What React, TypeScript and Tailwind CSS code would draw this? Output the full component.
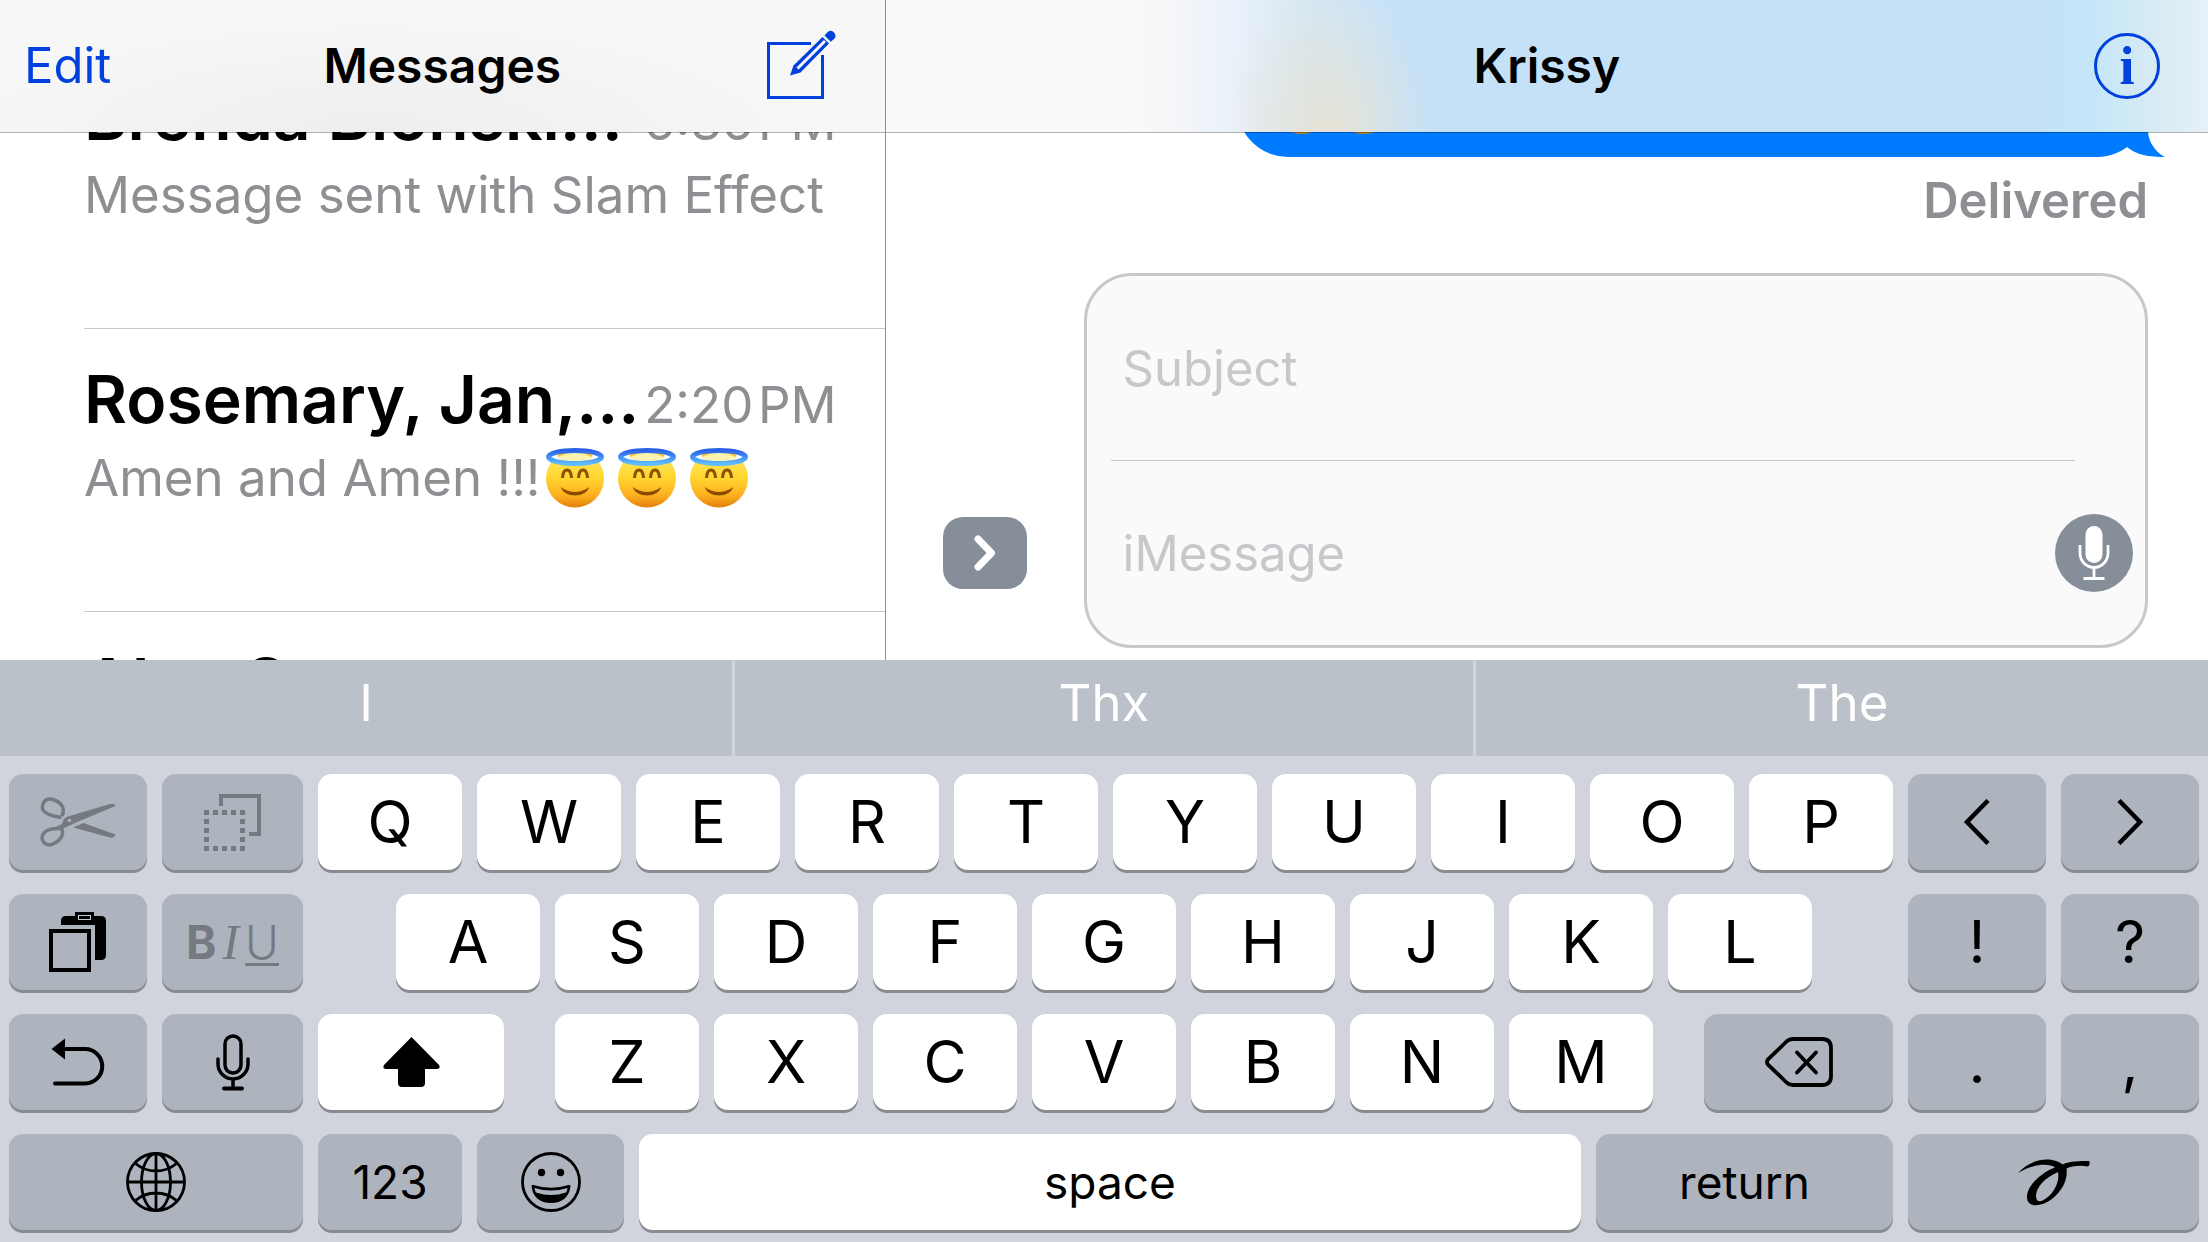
import type { ReactNode } from 'react'
import clsx from 'clsx'

interface Conversation {
  name: string
  time: string
  preview: string
  angels?: number
}

interface KeyDef {
  label: string
  // flex weight of the key inside its row
  size: string
  content?: ReactNode
  dark?: boolean
  small?: boolean
  spacer?: boolean
}

const conversations: Conversation[] = [
  { name: 'Brenda Blonski…', time: '6:36\u200aPM', preview: 'Message sent with Slam Effect' },
  { name: 'Rosemary, Jan,…', time: '2:20\u200aPM', preview: 'Amen and Amen !!!', angels: 3 },
  { name: 'Alan S', time: '', preview: '' }
]

const predictions = [
  { word: 'I', size: 'flex-[732]' },
  { word: 'Thx', size: 'flex-[738]' },
  { word: 'The', size: 'flex-[732]' }
]

function ComposeIcon() {
  return (
    <svg className="w-[71px] h-[71px]" viewBox="0 0 71 71" fill="none" aria-hidden="true">
      <path d="M45 14.5H2.5V68.5H56.5V26" stroke="currentColor" strokeWidth="3" />
      <path d="M56.5 8L27.5 36.5L24 46.5L34.5 43.5L63 14.5Z" fill="currentColor" />
      <path d="M59 12L31.5 39.5" stroke="#f7f7f7" strokeWidth="3" />
      <path d="M58.5 6.5L62 2.8Q64.5 .5 67.5 3Q71 6.5 68.5 9.5L64.8 12.8Z" fill="currentColor" />
    </svg>
  )
}

function AngelIcon() {
  return (
    <svg className="w-[60px] h-[60px]" viewBox="0 0 60 60" fill="none" aria-hidden="true">
      <defs>
        <linearGradient id="angelFace" x1="0" y1="0" x2="0" y2="1">
          <stop offset="0" stopColor="#fdf06a" />
          <stop offset=".5" stopColor="#ffd42e" />
          <stop offset=".8" stopColor="#fcae1e" />
          <stop offset="1" stopColor="#e07f0c" />
        </linearGradient>
        <linearGradient id="angelHalo" x1="0" y1="0" x2="0" y2="1">
          <stop offset="0" stopColor="#2b62e8" />
          <stop offset="1" stopColor="#5cbcff" />
        </linearGradient>
      </defs>
      <circle cx="30" cy="30.5" r="29" fill="url(#angelFace)" />
      <ellipse cx="30" cy="9" rx="28" ry="7" fill="#fff" />
      <path d="M12 9Q20 3 30 3T48 9Q44 14 30 14T12 9Z" fill="#fdf3b0" />
      <path d="M13 8Q20 3.5 30 3.5T47 8" stroke="#ffc229" strokeWidth="2.5" />
      <ellipse cx="30" cy="9" rx="26.5" ry="6.5" stroke="url(#angelHalo)" strokeWidth="5" />
      <path d="M17.5 30Q18 22 22 22T26.5 30M33.5 30Q34 22 38 22T42.5 30" stroke="#8a5200" strokeWidth="3" />
      <path d="M15.5 39Q30 49 44.5 39Q41 47.5 30 47.5T15.5 39Z" fill="#8a4b00" />
    </svg>
  )
}

function CutIcon() {
  return (
    <svg className="w-[77px] h-[51px]" viewBox="0 0 77 51" fill="none" aria-hidden="true">
      <path d="M22 19C25 12 23 6 13 2.5C5 0 1 7 3 13C5 17 15 19.5 21.5 20.5" stroke="currentColor" strokeWidth="3.5" />
      <path d="M21.5 31.5C24.5 37 21 43 14 46.5C6 50.5 0 44 3 37.5C5.5 32.5 14 31 21.5 31.5Z" stroke="currentColor" strokeWidth="3.5" />
      <path d="M13 31L22 27Q23 21 28 19.5L70 7Q74.5 6 75.5 9L36 25.5L22 32Z" fill="currentColor" />
      <path d="M33 30.5L43.5 26L75.5 37.5Q74 41.5 70 40.5Z" fill="currentColor" />
      <circle cx="29.5" cy="23.5" r="1.7" fill="#adb4be" />
    </svg>
  )
}

function CopyIcon() {
  const steps = [0, 9, 18, 27, 36]
  return (
    <svg className="w-[57px] h-[57px]" viewBox="0 0 57 57" fill="none" aria-hidden="true">
      <path d="M17 12V2H55V40H45" stroke="currentColor" strokeWidth="4" />
      {steps.map((x) =>
        steps
          .filter((y) => x === 0 || x === 36 || y === 0 || y === 36)
          .map((y) => <rect key={`${x}-${y}`} x={x} y={y + 16} width="5" height="5" fill="currentColor" />)
      )}
    </svg>
  )
}

function PasteIcon() {
  return (
    <svg className="w-[58px] h-[62px]" viewBox="0 0 58 62" fill="none" aria-hidden="true">
      <path d="M12 14V10Q12 5 17 5H26V1H45V5H52Q57 5 57 10V44Q57 49 52 49H46V14Z" fill="currentColor" />
      <rect x="29.5" y="4.5" width="12" height="4" stroke="#c3c9d1" />
      <rect x="2" y="20" width="38" height="39" stroke="currentColor" strokeWidth="4" />
    </svg>
  )
}

function UndoIcon() {
  return (
    <svg className="w-[54px] h-[50px]" viewBox="0 0 54 50" fill="none" aria-hidden="true">
      <path d="M12 12H34A17 17 0 0 1 34 46.5H4" stroke="currentColor" strokeWidth="4" strokeLinecap="round" />
      <path d="M.5 12L14 1.5V22.5Z" fill="currentColor" />
    </svg>
  )
}

function MicIcon() {
  return (
    <svg className="w-[34px] h-[57px]" viewBox="0 0 34 57" fill="none" stroke="currentColor" strokeLinecap="round" aria-hidden="true">
      <rect x="9" y="2" width="16" height="37" rx="8" strokeWidth="3.5" />
      <path d="M2 25V30A15 15 0 0 0 32 30V25M17 46V54" strokeWidth="3.5" />
      <path d="M8 54.5H26" strokeWidth="4" />
    </svg>
  )
}

function ShiftIcon() {
  return (
    <svg className="w-[57px] h-[50px]" viewBox="0 0 57 50" fill="currentColor" aria-hidden="true">
      <path d="M28.5 0L56 28Q58 32 54 32H42V46Q42 50 38 50H19Q15 50 15 46V32H3Q-1 32 1 28Z" />
    </svg>
  )
}

function BackspaceIcon() {
  return (
    <svg className="w-[68px] h-[50px]" viewBox="0 0 68 50" fill="none" stroke="currentColor" strokeWidth="3.8" strokeLinecap="round" aria-hidden="true">
      <path d="M2.5 27Q1.5 25 2.5 23L21 5Q24 2 28 2H57Q66 2 66 11V39Q66 48 57 48H28Q24 48 21 45Z" />
      <path d="M32 15.5L51 35.5M51 15.5L32 35.5" />
    </svg>
  )
}

function GlobeIcon() {
  return (
    <svg className="w-[60px] h-[60px]" viewBox="0 0 60 60" fill="none" stroke="currentColor" strokeWidth="2.8" aria-hidden="true">
      <circle cx="30" cy="30" r="28.5" />
      <ellipse cx="30" cy="30" rx="14.5" ry="28.5" />
      <path d="M30 1.5V58.5M1.5 30H58.5M9 11Q18 19 30 19T51 11M9 49Q18 41 30 41T51 49" />
    </svg>
  )
}

function SmileyIcon() {
  return (
    <svg className="w-[60px] h-[60px]" viewBox="0 0 60 60" fill="none" aria-hidden="true">
      <circle cx="30" cy="30" r="28.5" stroke="currentColor" strokeWidth="2.8" />
      <circle cx="20.5" cy="20.5" r="3.7" fill="currentColor" />
      <circle cx="39.5" cy="20.5" r="3.7" fill="currentColor" />
      <path d="M10.5 34Q10.5 32.5 12.5 33Q30 38.5 47.5 33Q49.5 32.5 49.5 34C48.5 45 41 51 30 51S11.5 45 10.5 34Z" fill="currentColor" />
      <path d="M13.5 36Q30 41 46.5 36Q46 39 45 40.5Q30 45.5 15 40.5Q14 39 13.5 36Z" fill="#adb4be" />
    </svg>
  )
}

function ScribbleIcon() {
  return (
    <svg className="w-[74px] h-[52px]" viewBox="17 25 74 52" fill="currentColor" fillRule="evenodd" aria-hidden="true">
      <path d="M18 42C28 31 42 27 52 29C57 30 60 31 62.5 33.5C70 30 80 30 89 30Q91 33 88 35.5C80 34 72 35 66.5 37.5C68 48 63 59 52 68C41 76 28 77 27 67C26 55 42 41 55 36.5C50 32.5 34 32 18 42ZM58 41C44 47 36 57 36 65C36 70.5 39.5 71.5 43.5 69C53 64 60 52 58 41Z" />
    </svg>
  )
}

function Chevron({ flip }: { flip?: boolean }) {
  return (
    <svg className="w-[28px] h-[46px]" viewBox="0 0 28 46" fill="none" stroke="currentColor" strokeWidth="4.5" aria-hidden="true">
      <path d={flip ? 'M3 1.5L24 23L3 44.5' : 'M25 1.5L4 23L25 44.5'} />
    </svg>
  )
}

const leftPad: KeyDef[][] = [
  [
    { label: 'Cut', size: 'flex-[138]', dark: true, content: <span className="text-[#757a81]"><CutIcon /></span> },
    { label: 'Copy', size: 'flex-[141]', dark: true, content: <span className="text-[#757a81]"><CopyIcon /></span> }
  ],
  [
    { label: 'Paste', size: 'flex-[138]', dark: true, content: <PasteIcon /> },
    {
      label: 'Bold, italic, underline',
      size: 'flex-[141]',
      dark: true,
      content: (
        <span className="flex items-baseline gap-1.5 text-[#757a81] text-[46px] leading-[60px]">
          <span className="font-bold">B</span>
          <span className="font-['Liberation_Serif',serif] italic text-[50px]">I</span>
          <span className="font-light underline decoration-[3px] underline-offset-4">U</span>
        </span>
      )
    }
  ],
  [
    { label: 'Undo', size: 'flex-[138]', dark: true, content: <UndoIcon /> },
    { label: 'Dictate', size: 'flex-[141]', dark: true, content: <MicIcon /> }
  ],
  [{ label: 'Next keyboard', size: 'flex-1', dark: true, content: <GlobeIcon /> }]
]

const letters = (row: string): KeyDef[] =>
  row.split('').map((label) => ({ label, size: 'flex-[144]' }))

const mainPad: KeyDef[][] = [
  letters('QWERTYUIOP'),
  [
    { label: 'start', size: 'flex-[63]', spacer: true },
    ...letters('ASDFGHJKL'),
    { label: 'end', size: 'flex-[66]', spacer: true }
  ],
  [
    { label: 'Shift', size: 'flex-[186]', content: <ShiftIcon /> },
    { label: 'start', size: 'flex-[21]', spacer: true },
    ...letters('ZXCVBNM'),
    { label: 'end', size: 'flex-[21]', spacer: true },
    { label: 'Delete', size: 'flex-[189]', dark: true, content: <BackspaceIcon /> }
  ],
  [
    { label: '123', size: 'flex-[144]', dark: true, small: true },
    { label: 'Emoji', size: 'flex-[147]', dark: true, content: <SmileyIcon /> },
    { label: 'space', size: 'flex-[942]', small: true },
    { label: 'return', size: 'flex-[297]', dark: true, small: true }
  ]
]

const rightPad: KeyDef[][] = [
  [
    { label: 'Cursor left', size: 'flex-1', dark: true, content: <Chevron /> },
    { label: 'Cursor right', size: 'flex-1', dark: true, content: <Chevron flip /> }
  ],
  [
    { label: '!', size: 'flex-1', dark: true },
    { label: '?', size: 'flex-1', dark: true }
  ],
  [
    { label: '.', size: 'flex-1', dark: true },
    { label: ',', size: 'flex-1', dark: true }
  ],
  [{ label: 'Handwriting', size: 'flex-1', dark: true, content: <ScribbleIcon /> }]
]

function Key({ def }: { def: KeyDef }) {
  if (def.spacer) return <div className={def.size} />
  return (
    <button
      type="button"
      aria-label={def.content ? def.label : undefined}
      className={clsx(
        'min-w-0 h-24 flex items-center justify-center rounded-[14px] shadow-[0_3px_0_#888b8f] text-black',
        def.size,
        def.dark ? 'bg-[#adb4be]' : 'bg-white',
        def.small ? 'text-[46px]' : 'text-[59px]'
      )}
    >
      {def.content ?? def.label}
    </button>
  )
}

function Pad({ rows, size }: { rows: KeyDef[][]; size: string }) {
  return (
    <div className={clsx('min-w-0 flex flex-col gap-6', size)}>
      {rows.map((row, i) => (
        <div key={i} className="flex gap-[15px]">
          {row.map((def) => (
            <Key key={def.label} def={def} />
          ))}
        </div>
      ))}
    </div>
  )
}

function Sidebar() {
  return (
    <aside className="flex-[885] min-w-0 flex flex-col border-r border-[#8f8f93]">
      <header className="relative z-10 h-[133px] -mb-px shrink-0 grid grid-cols-[1fr_auto_1fr] items-center px-6 border-b border-black/30 bg-clip-padding bg-[radial-gradient(ellipse_50%_90%_at_42%_100%,#eeeeee,#f7f7f7)]">
        <button type="button" className="justify-self-start text-[49px] text-[#0040dd]">Edit</button>
        <h1 className="text-[48px] font-semibold">Messages</h1>
        <button type="button" aria-label="New message" className="justify-self-end pr-6 pb-1 text-[#0040dd]">
          <ComposeIcon />
        </button>
      </header>
      <div className="flex-1 min-h-0 overflow-hidden">
        <ul className="ml-[84px] -mt-[86px]">
          {conversations.map((c) => (
            <li key={c.name} className="pt-[30px] pb-24 border-b border-[#c8c7cc] whitespace-nowrap">
              <div className="h-[82px] flex items-baseline justify-between pr-12 leading-[80px]">
                <span className="text-[66px] font-semibold">{c.name}</span>
                <span className="text-[51px] text-[#8e8e93]">{c.time}</span>
              </div>
              <div className="h-[74px] flex items-center gap-1 text-[51px] text-[#8e8e93]">
                {c.preview}
                {c.angels && (
                  <span className="flex gap-3">
                    {Array.from({ length: c.angels }, (_, i) => (
                      <AngelIcon key={i} />
                    ))}
                  </span>
                )}
              </div>
            </li>
          ))}
        </ul>
      </div>
    </aside>
  )
}

function Chat() {
  return (
    <main className="flex-[1323] min-w-0 flex flex-col">
      <header className="relative z-10 h-[133px] -mb-px shrink-0 grid grid-cols-[1fr_auto_1fr] items-center px-12 border-b border-black/30 bg-clip-padding bg-[radial-gradient(ellipse_8%_110%_at_33.5%_100%,#e6e3d5,#e6e3d500),linear-gradient(to_right,#f9f9f9_18%,#f4f6f8_22%,#e8f0f9_27%,#d5e7f3_32%,#c5e1f8_39%,#c5e1f8_87%,#c4e6f8_91%,#d5eaf4_95.5%,#e6f0f8)]">
        <span />
        <h2 className="text-[48px] font-semibold">Krissy</h2>
        <button
          type="button"
          aria-label="Details"
          className="justify-self-end w-[66px] h-[66px] flex items-center justify-center rounded-full border-[3px] border-[#0040dd] text-[#0040dd] font-['Liberation_Serif',serif] font-bold text-[54px] leading-none"
        >
          i
        </button>
      </header>
      <div className="flex-1 min-h-0 flex flex-col overflow-hidden pr-[60px] pb-3">
        <div className="relative shrink-0 self-end w-[72.2%] h-[102px] -mt-[77px] flex items-end gap-[5px] pl-9 pb-[23px] rounded-[51px] bg-[#007bff]">
          {[0, 1].map((i) => (
            <svg key={i} className="w-[57px] h-[57px]" viewBox="0 0 57 57" aria-hidden="true">
              <circle cx="28.5" cy="28.5" r="28.5" fill="#c98414" />
            </svg>
          ))}
          <svg className="absolute bottom-0 -right-[17px] w-[45px] h-[38px]" viewBox="0 0 45 38" fill="#007bff" aria-hidden="true">
            <path d="M0 0H28V12C28 22 35 33 45 38C30 38 15 36 6 27L0 24Z" />
          </svg>
        </div>
        <p className="mt-3.5 self-end text-[49px] leading-[60px] font-semibold text-[#8e8e93]">Delivered</p>
        <div className="mt-auto flex items-end gap-[57px] pl-[57px]">
          <button
            type="button"
            aria-label="More apps"
            className="shrink-0 w-[84px] h-[72px] mb-[59px] flex items-center justify-center rounded-[20px] bg-[#858e99]"
          >
            <svg className="w-[22px] h-[36px]" viewBox="0 0 22 36" fill="none" stroke="#fff" strokeWidth="7" strokeLinecap="round" strokeLinejoin="round" aria-hidden="true">
              <path d="M4 4L17.5 18L4 32" />
            </svg>
          </button>
          <form className="flex-1 min-w-0 flex flex-col rounded-[48px] border-[3px] border-[#c7c7cc] bg-[#fafafa]">
            <div className="ml-6 mr-[70px] border-b border-[#c7c7cc]">
              <input
                type="text"
                aria-label="Subject"
                placeholder="Subject"
                className="w-full h-[184px] pl-3 bg-transparent text-[49px] outline-none placeholder:text-[#c7c7cc]"
              />
            </div>
            <div className="flex items-center pl-6 pr-3">
              <input
                type="text"
                aria-label="iMessage"
                placeholder="iMessage"
                className="flex-1 min-w-0 h-[184px] pl-3 bg-transparent text-[49px] outline-none placeholder:text-[#c7c7cc]"
              />
              <button
                type="button"
                aria-label="Record audio"
                className="shrink-0 w-[78px] h-[78px] flex items-center justify-center rounded-full bg-[#858e99]"
              >
                <svg className="w-[32px] h-[54px]" viewBox="0 0 32 54" fill="none" stroke="#fff" aria-hidden="true">
                  <rect x="7.5" y="0" width="17" height="37" rx="8.5" fill="#fff" stroke="none" />
                  <path d="M2 19V27A14 14.5 0 0 0 30 27V19M16 41V52" strokeWidth="2.8" />
                  <path d="M5.5 52.5H26.5" strokeWidth="3" />
                </svg>
              </button>
            </div>
          </form>
        </div>
      </div>
    </main>
  )
}

export default function App() {
  return (
    <div className="h-screen flex flex-col overflow-hidden bg-white text-black font-['Inter','Liberation_Sans',sans-serif]">
      <div className="flex-1 min-h-0 flex">
        <Sidebar />
        <Chat />
      </div>
      <section aria-label="Keyboard" className="shrink-0 bg-[#d1d4dc]">
        <div className="flex gap-[3px]">
          {predictions.map((p) => (
            <button key={p.word} type="button" className={clsx('h-24 pb-2.5 bg-[#bac1c9] text-[51px] text-white', p.size)}>
              {p.word}
            </button>
          ))}
        </div>
        <div className="flex gap-[15px] px-[9px] pt-[18px] pb-3">
          <Pad rows={leftPad} size="flex-[294]" />
          <Pad rows={mainPad} size="flex-[1575]" />
          <Pad rows={rightPad} size="flex-[291]" />
        </div>
      </section>
    </div>
  )
}
